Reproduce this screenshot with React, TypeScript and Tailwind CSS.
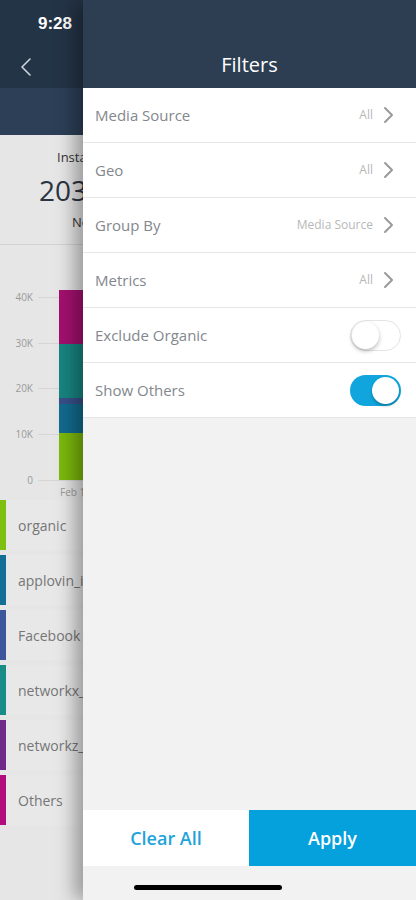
import React from "react";

const font = { fontFamily: '"Open Sans", "Noto Sans", sans-serif' };

function Chevron() {
  return (
    <svg width="11" height="18" viewBox="0 0 11 18" className="ml-[10px]">
      <path d="M2 2 L9 9 L2 16" fill="none" stroke="#9a9a9a" strokeWidth="2" strokeLinecap="round" strokeLinejoin="round" />
    </svg>
  );
}

function Row({ label, value }: { label: string; value?: string }) {
  return (
    <div className="h-[55px] flex items-center justify-between pl-[12px] pr-[22px] bg-white border-b border-[#e6e6e6]">
      <span className="text-[15px] text-[#83878e] font-medium">{label}</span>
      {value !== undefined && (
        <div className="flex items-center">
          <span className="text-[12px] text-[#b8b8b8]">{value}</span>
          <Chevron />
        </div>
      )}
    </div>
  );
}

function Toggle({ on }: { on: boolean }) {
  return on ? (
    <div className="w-[51px] h-[31px] rounded-full bg-[#10a5dd] relative">
      <div className="absolute right-[2px] top-[2px] w-[27px] h-[27px] rounded-full bg-white shadow-[0_2px_3px_rgba(0,0,0,0.25)]" />
    </div>
  ) : (
    <div className="w-[51px] h-[31px] rounded-full bg-white border border-[#e3e3e3] relative">
      <div className="absolute left-[1px] top-[1px] w-[27px] h-[27px] rounded-full bg-white shadow-[0_2px_4px_rgba(0,0,0,0.28)]" />
    </div>
  );
}

function ToggleRow({ label, on }: { label: string; on: boolean }) {
  return (
    <div className="h-[55px] flex items-center justify-between pl-[12px] pr-[15px] bg-white border-b border-[#e6e6e6]">
      <span className="text-[15px] text-[#83878e] font-medium">{label}</span>
      <Toggle on={on} />
    </div>
  );
}

const legend = [
  { name: "organic", color: "#7fbf10" },
  { name: "applovin_int", color: "#136f95" },
  { name: "Facebook", color: "#3d559a" },
  { name: "networkx_int", color: "#188c86" },
  { name: "networkz_int", color: "#6e2a86" },
  { name: "Others", color: "#b00c7c" },
];

function Background() {
  return (
    <div className="w-[416px] h-[900px] bg-[#e6e6e6] flex flex-col">
      <div className="h-[88px] bg-[#243447] relative">
        <div className="absolute left-[38px] top-[11px] text-white text-[17px] font-semibold" style={{ fontFamily: '"Liberation Sans", sans-serif' }}>9:28</div>
        <svg className="absolute left-[20px] top-[57px]" width="12" height="20" viewBox="0 0 12 20">
          <path d="M10 2 L2 10 L10 18" fill="none" stroke="#cfd6de" strokeWidth="1.6" strokeLinecap="round" strokeLinejoin="round" />
        </svg>
      </div>
      <div className="h-[47px] bg-[#2c3f57]" />
      <div className="h-[110px] border-b border-[#d2d2d2]">
        <div className="w-[83px] h-full overflow-hidden whitespace-nowrap flex flex-col items-start pt-[13px]">
          <div className="text-[13px] text-[#333] ml-[57px] leading-[18px]">Installs</div>
          <div className="text-[28px] text-[#2b3441] leading-[36px] mt-[6px] ml-[39px]">20341</div>
          <div className="text-[13px] text-[#333] mt-[5px] ml-[72px] leading-[18px]">Non-organic</div>
        </div>
      </div>
      <div className="h-[255px] relative">
        {[
          { l: "40K", y: 52 },
          { l: "30K", y: 98 },
          { l: "20K", y: 143 },
          { l: "10K", y: 189 },
          { l: "0", y: 235 },
        ].map((t) => (
          <div key={t.l} className="absolute left-0 flex items-center" style={{ top: t.y - 7 }}>
            <div className="w-[33px] text-right text-[10px] text-[#9a9a9a] leading-[14px]">{t.l}</div>
            <div className="ml-[5px] w-[400px] h-px bg-[#d6d6d6]" />
          </div>
        ))}
        <div className="absolute left-[59px] top-[45px] w-[60px] flex flex-col">
          <div className="h-[54px] bg-[#a3106f]" />
          <div className="h-[54px] bg-[#178580]" />
          <div className="h-[6px] bg-[#394f8a]" />
          <div className="h-[29px] bg-[#126b8e]" />
          <div className="h-[47px] bg-[#7cb80c]" />
        </div>
        <div className="absolute left-[60px] top-[240px] w-[23px] overflow-hidden whitespace-nowrap text-[10px] text-[#9a9a9a]">Feb 13</div>
      </div>
      <div className="flex flex-col gap-[5px]">
        {legend.map((it) => (
          <div key={it.name} className="h-[50px] flex items-center bg-[#e8e8e8]">
            <div className="w-[6px] h-full" style={{ background: it.color }} />
            <span className="ml-[12px] w-[65px] overflow-hidden whitespace-nowrap text-[14px] text-[#767676] font-medium">{it.name}</span>
          </div>
        ))}
      </div>
    </div>
  );
}

export default function App() {
  return (
    <div className="relative w-[416px] h-[900px] overflow-hidden" style={font}>
      <Background />
      <div className="absolute top-0 right-0 w-[333px] h-[900px] bg-[#f2f2f2] flex flex-col shadow-[-8px_0_18px_rgba(0,0,0,0.35)]">
        <div className="h-[88px] bg-[#2d3e52] flex items-end justify-center pb-[8px]">
          <span className="text-white text-[20px]">Filters</span>
        </div>
        <Row label="Media Source" value="All" />
        <Row label="Geo" value="All" />
        <Row label="Group By" value="Media Source" />
        <Row label="Metrics" value="All" />
        <ToggleRow label="Exclude Organic" on={false} />
        <ToggleRow label="Show Others" on={true} />
        <div className="flex-1" />
        <div className="h-[56px] flex">
          <div className="w-[166px] bg-white flex items-center justify-center">
            <span className="text-[18px] text-[#1ea3da] font-semibold">Clear All</span>
          </div>
          <div className="flex-1 bg-[#05a1dd] flex items-center justify-center">
            <span className="text-[18px] text-white font-semibold">Apply</span>
          </div>
        </div>
        <div className="h-[34px]" />
      </div>
      <div className="absolute left-[134px] top-[885px] w-[148px] h-[5px] rounded-full bg-black" />
    </div>
  );
}
